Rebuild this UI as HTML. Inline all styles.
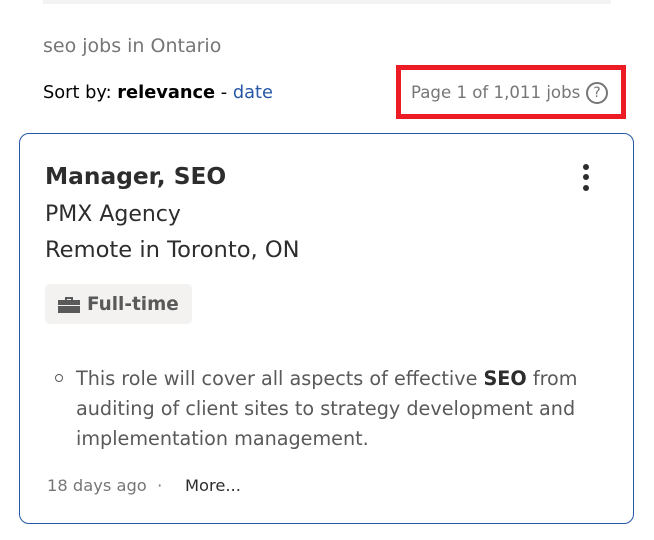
<!DOCTYPE html>
<html><head><meta charset="utf-8"><style>
*{margin:0;padding:0;box-sizing:border-box}
body{width:654px;height:540px;background:#fff;position:relative;overflow:hidden;font-family:"DejaVu Sans","Liberation Sans",sans-serif;color:#2d2d2d}
.a{position:absolute;white-space:nowrap;line-height:1}
</style></head><body>
<div class="a" style="left:43px;top:0;width:568px;height:4px;background:#f3f3f3"></div>
<div class="a" style="left:43px;top:37px;font-size:19px;color:#767676">seo jobs in Ontario</div>
<div class="a" style="left:43px;top:84px;font-size:17.8px;color:#000">Sort by: <b>relevance</b> - <span style="color:#2557a7">date</span></div>
<div class="a" style="left:396px;top:65px;width:230px;height:54px;border:5px solid #ed1c24"></div>
<div class="a" style="left:411px;top:85px;font-size:16.6px;color:#767676">Page 1 of 1,011 jobs</div>
<div class="a" style="left:586px;top:82px;width:22px;height:22px;border:2px solid #767676;border-radius:50%;font-size:14px;color:#767676;text-align:center;line-height:18px">?</div>
<div class="a" style="left:19px;top:133px;width:615px;height:391px;border:1px solid #2557a7;border-radius:10px"></div>
<div class="a" style="left:45px;top:165px;font-size:23.3px;font-weight:bold">Manager, SEO</div>
<div class="a" style="left:583px;top:164px;width:6px;height:6px;border-radius:50%;background:#2d2d2d"></div>
<div class="a" style="left:583px;top:174px;width:6px;height:6px;border-radius:50%;background:#2d2d2d"></div>
<div class="a" style="left:583px;top:185px;width:6px;height:6px;border-radius:50%;background:#2d2d2d"></div>
<div class="a" style="left:45px;top:204px;font-size:22px">PMX Agency</div>
<div class="a" style="left:45px;top:239px;font-size:22.6px">Remote in Toronto, ON</div>
<div class="a" style="left:45px;top:284px;width:147px;height:40px;background:#f3f2f1;border-radius:5px"></div>
<svg class="a" style="left:58px;top:294px" width="22" height="20" viewBox="0 0 22 20"><path d="M7 3h8v3h-2V5H9v1H7z" fill="#595959"/><rect x="0" y="6" width="22" height="5" fill="#595959"/><rect x="0" y="12" width="22" height="7" fill="#595959"/></svg>
<div class="a" style="left:87px;top:296px;font-size:18.4px;font-weight:bold;color:#595959">Full-time</div>
<div class="a" style="left:55px;top:374px;width:8px;height:8px;border:1px solid #595959;border-radius:50%"></div>
<div class="a" style="left:76px;top:364px;font-size:19.2px;line-height:30px;color:#595959;white-space:normal;width:535px">This role will cover all aspects of effective <b style="color:#2d2d2d">SEO</b> from auditing of client sites to strategy development and implementation management.</div>
<div class="a" style="left:47px;top:478px;font-size:16.3px;color:#767676">18 days ago &nbsp;·</div>
<div class="a" style="left:185px;top:478px;font-size:16.3px;color:#2d2d2d">More...</div>
</body></html>
